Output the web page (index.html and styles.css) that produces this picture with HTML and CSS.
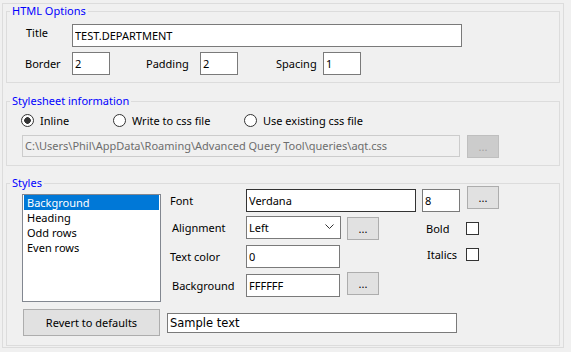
FILE: index.html
```html
<!DOCTYPE html>
<html lang="en">
<head>
    <meta charset="UTF-8">
    <meta name="viewport" content="width=device-width, initial-scale=1.0">
    <title>HTML Options</title>
    <link rel="stylesheet" href="styles.css">
</head>
<body>
<div class="frame">
    <fieldset class="group group-html">
        <legend>HTML Options</legend>
        <div class="row row-title">
            <label class="lbl lbl-title" for="title">Title</label>
            <input type="text" id="title" class="box box-title" value="TEST.DEPARTMENT">
        </div>
        <div class="row row-table">
            <label class="lbl lbl-border" for="border">Border</label>
            <input type="text" id="border" class="box box-num" value="2">
            <label class="lbl lbl-padding" for="padding">Padding</label>
            <input type="text" id="padding" class="box box-num" value="2">
            <label class="lbl lbl-spacing" for="spacing">Spacing</label>
            <input type="text" id="spacing" class="box box-num" value="1">
        </div>
    </fieldset>

    <fieldset class="group group-css">
        <legend>Stylesheet information</legend>
        <div class="row row-radios">
            <label class="opt opt-inline"><input type="radio" name="css" checked><span>Inline</span></label>
            <label class="opt opt-write"><input type="radio" name="css"><span>Write to css file</span></label>
            <label class="opt"><input type="radio" name="css"><span>Use existing css file</span></label>
        </div>
        <div class="row row-path">
            <input type="text" class="box box-path" value="C:\Users\Phil\AppData\Roaming\Advanced Query Tool\queries\aqt.css" disabled>
            <button class="btn btn-dots" disabled>...</button>
        </div>
    </fieldset>

    <fieldset class="group group-styles">
        <legend>Styles</legend>
        <div class="styles-main">
            <div class="list">
                <div class="item selected">Background</div>
                <div class="item">Heading</div>
                <div class="item">Odd rows</div>
                <div class="item">Even rows</div>
            </div>
            <div class="props">
                <div class="prop prop-font">
                    <label class="lbl lbl-prop" for="font">Font</label>
                    <input type="text" id="font" class="box box-font" value="Verdana">
                    <input type="text" class="box box-size" value="8">
                    <button class="btn btn-dots btn-font">...</button>
                </div>
                <div class="prop prop-align">
                    <label class="lbl lbl-prop lbl-indent">Alignment</label>
                    <div class="combo">
                        <span>Left</span>
                        <svg class="chevron" width="9" height="6" viewBox="0 0 9 6">
                            <polyline points="0.5,0.5 4.5,4.5 8.5,0.5" fill="none" stroke="#333" stroke-width="1"/>
                        </svg>
                    </div>
                    <button class="btn btn-dots btn-align">...</button>
                    <div class="check check-bold">
                        <label for="bold">Bold</label>
                        <input type="checkbox" id="bold">
                    </div>
                </div>
                <div class="prop prop-color">
                    <label class="lbl lbl-prop" for="color">Text color</label>
                    <input type="text" id="color" class="box box-mid" value="0">
                    <div class="check check-italics">
                        <label for="italics">Italics</label>
                        <input type="checkbox" id="italics">
                    </div>
                </div>
                <div class="prop prop-back">
                    <label class="lbl lbl-prop lbl-indent" for="back">Background</label>
                    <input type="text" id="back" class="box box-mid" value="FFFFFF">
                    <button class="btn btn-dots btn-back">...</button>
                </div>
            </div>
        </div>
        <div class="styles-foot">
            <button class="btn btn-revert">Revert to defaults</button>
            <input type="text" class="box box-sample" value="Sample text">
        </div>
    </fieldset>
</div>
</body>
</html>
```

FILE: styles.css
```css
* {
    box-sizing: border-box;
}
body {
    margin: 0;
    background-color: #f0f0f0;
    font-family: "Noto Sans", "Open Sans", sans-serif;
    font-size: 11px;
    color: #000;
}
input,
button {
    font: inherit;
    color: inherit;
    margin: 0;
}
.frame {
    margin: 3px 7px 0 2px;
    padding: 0 3px 1px 3px;
    border: 1px solid #dcdcdc;
}
.group {
    margin: 0;
    padding: 0;
    min-width: 0;
    border: 1px solid #dcdcdc;
}
.group legend {
    margin-left: 3px;
    padding: 0 2px;
    line-height: 14px;
    color: #0000ff;
}
.group-html {
    padding-bottom: 7px;
}
.group-css {
    margin-top: 11px;
    padding-bottom: 7px;
}
.group-styles {
    margin-top: 10px;
    padding-bottom: 9px;
}
.row {
    display: flex;
    align-items: center;
}
.lbl {
    line-height: 13px;
    white-space: nowrap;
}
.box {
    height: 23px;
    padding: 0 2px 1px;
    border: 1px solid #7a7a7a;
    background-color: #fff;
    outline: none;
}

/* html options */
.row-title {
    margin-top: 6px;
    padding-left: 19px;
    height: 23px;
}
.lbl-title {
    width: 46px;
    align-self: flex-start;
    margin-top: 2px;
}
.box-title {
    width: 390px;
}
.row-table {
    margin-top: 5px;
    padding-left: 18px;
    height: 23px;
}
.lbl-border {
    width: 47px;
}
.lbl-padding {
    width: 54px;
    margin-left: 36px;
}
.lbl-spacing {
    width: 47px;
    margin-left: 38px;
}
.box-num {
    width: 38px;
}

/* stylesheet information */
.row-radios {
    margin-top: 5px;
    padding-left: 14px;
    height: 15px;
}
.opt {
    display: flex;
    align-items: center;
    gap: 6px;
    line-height: 13px;
}
.opt-inline {
    width: 92px;
}
.opt-write {
    width: 131px;
}
.opt input {
    appearance: none;
    width: 13px;
    height: 13px;
    margin: 0;
    border: 1px solid #333;
    border-radius: 50%;
    background: #fff;
}
.opt input:checked {
    background: radial-gradient(circle, #333 0 3px, #fff 3.6px);
}
.row-path {
    margin-top: 7px;
    padding-left: 15px;
    align-items: flex-start;
}
.box-path {
    width: 438px;
    height: 22px;
    border-color: #cccccc;
    background-color: #f0f0f0;
    color: #6d6d6d;
}
.btn {
    border: 1px solid #adadad;
    background-color: #e1e1e1;
    padding: 0;
}
.btn-dots {
    width: 32px;
    height: 23px;
    margin-left: 7px;
    line-height: 13px;
}
.btn-dots:disabled {
    border-color: #bfbfbf;
    background-color: #cccccc;
    color: #a0a0a0;
}

/* styles */
.styles-main {
    display: flex;
    align-items: flex-start;
    padding-left: 15px;
}
.list {
    width: 139px;
    height: 108px;
    margin-top: 4px;
    padding: 0 1px;
    border: 1px solid #828790;
    background-color: #fff;
}
.item {
    height: 15px;
    line-height: 15px;
    padding-left: 3px;
}
.item.selected {
    background-color: #0078d7;
    color: #fff;
}
.props {
    margin-left: 9px;
    margin-top: -1px;
}
.prop {
    display: flex;
    align-items: center;
    height: 23px;
}
.prop-align {
    margin-top: 4px;
}
.prop-color,
.prop-back {
    margin-top: 6px;
}
.lbl-prop {
    width: 76px;
}
.lbl-indent {
    padding-left: 2px;
}
.box-font {
    width: 170px;
    border-color: #333;
}
.box-size {
    width: 38px;
    margin-left: 6px;
}
.btn-font {
    align-self: flex-start;
    margin-top: -3px;
}
.combo {
    display: flex;
    align-items: center;
    width: 95px;
    height: 23px;
    padding: 0 0 1px 2px;
    border: 1px solid #7a7a7a;
    background-color: #fff;
}
.chevron {
    margin-left: auto;
    margin-right: 6px;
}
.btn-align {
    margin-left: 6px;
    align-self: flex-start;
    margin-top: 1px;
}
.box-mid {
    width: 94px;
}
.btn-back {
    align-self: flex-start;
    margin-top: -2px;
}
.check {
    display: flex;
    align-items: center;
    line-height: 13px;
}
.check input {
    appearance: none;
    width: 13px;
    height: 13px;
    margin: 0;
    border: 1px solid #333;
    background: #fff;
}
.check-bold {
    margin-left: 47px;
    margin-top: 2px;
}
.check-bold label {
    width: 40px;
}
.check-italics {
    margin-left: 87px;
    align-self: flex-start;
    margin-top: 3px;
}
.check-italics label {
    width: 39px;
}
.styles-foot {
    display: flex;
    align-items: center;
    margin-top: 7px;
    padding-left: 16px;
}
.btn-revert {
    width: 137px;
    height: 27px;
}
.box-sample {
    width: 290px;
    height: 20px;
    margin-left: 7px;
    padding: 0 2px;
    font-family: "DejaVu Sans", Verdana, sans-serif;
    font-size: 11.5px;
}
```
